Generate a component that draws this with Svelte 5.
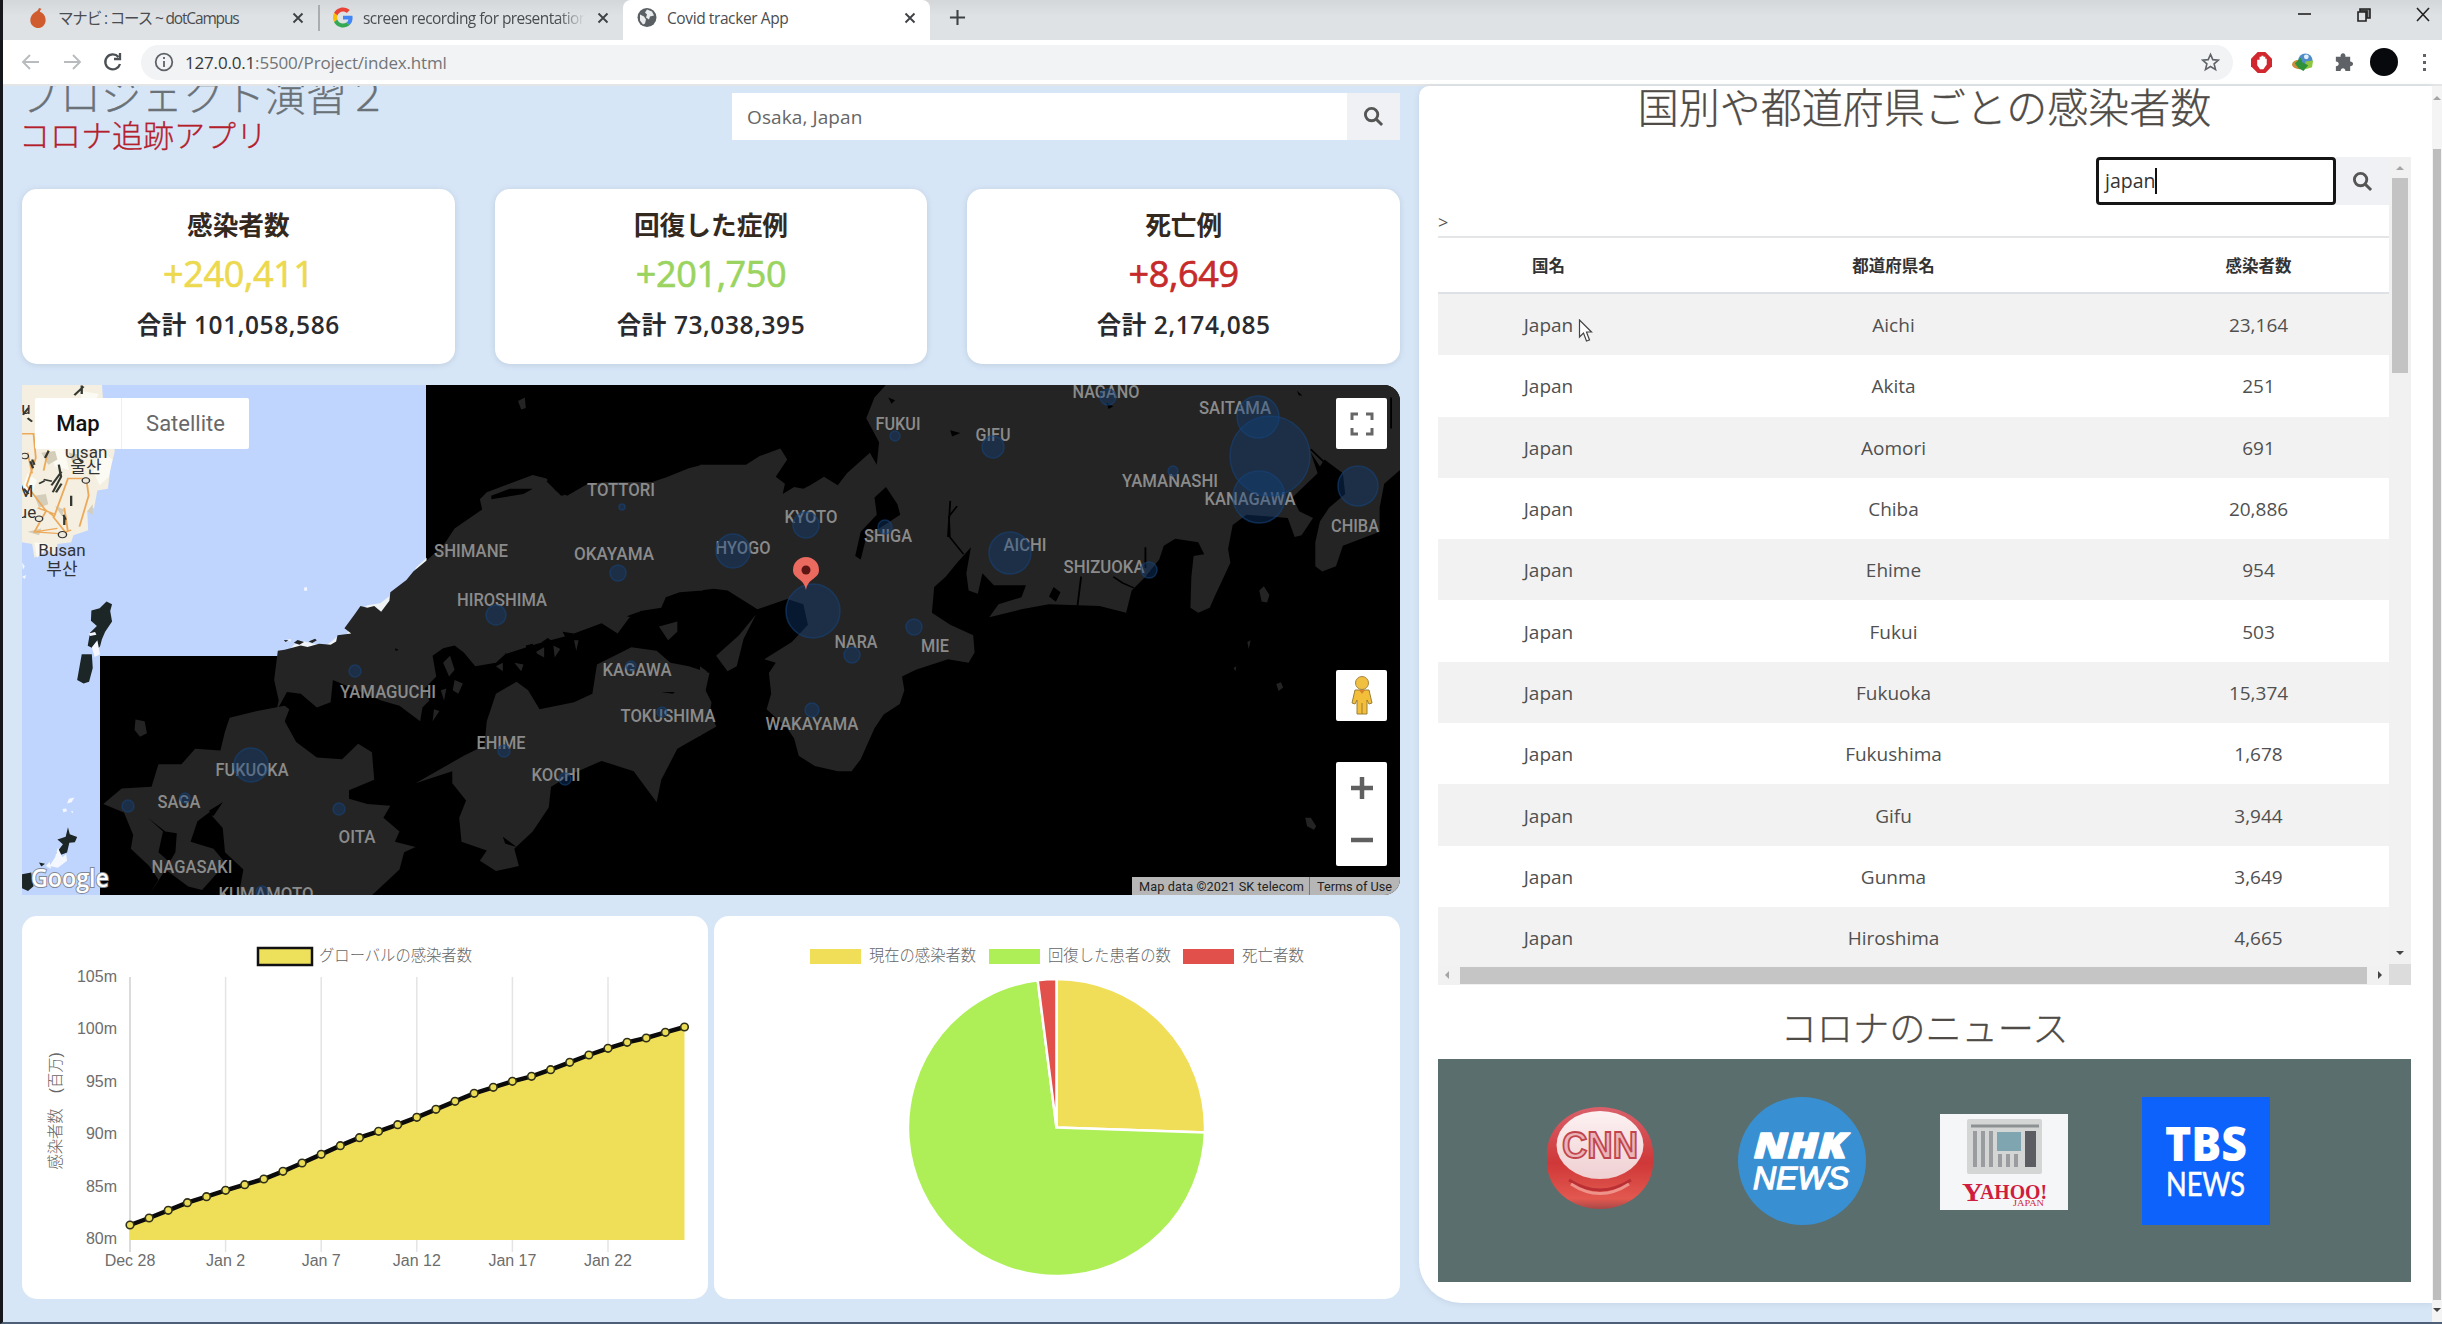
<script>
  const tabs = [
    { title: 'マナビ : コース ~ dotCampus', icon: 'flame' },
    { title: 'screen recording for presentation', icon: 'google' },
    { title: 'Covid tracker App', icon: 'globe', active: true }
  ];

  const stats = [
    { title: '感染者数', today: '+240,411', total: '合計 101,058,586', tone: 'yellow' },
    { title: '回復した症例', today: '+201,750', total: '合計 73,038,395', tone: 'green' },
    { title: '死亡例', today: '+8,649', total: '合計 2,174,085', tone: 'red' }
  ];

  const rows = [
    ['Aichi', '23,164'], ['Akita', '251'], ['Aomori', '691'], ['Chiba', '20,886'],
    ['Ehime', '954'], ['Fukui', '503'], ['Fukuoka', '15,374'], ['Fukushima', '1,678'],
    ['Gifu', '3,944'], ['Gunma', '3,649'], ['Hiroshima', '4,665']
  ];

  // name, centre x, centre y, drawn width (map canvas units)
  const labels = [
    ['TOTTORI', 599, 105, 68], ['SHIMANE', 449, 166, 74], ['OKAYAMA', 592, 169, 80],
    ['HIROSHIMA', 480, 215, 90], ['YAMAGUCHI', 366, 307, 96], ['FUKUOKA', 230, 385, 73],
    ['SAGA', 157, 417, 43], ['OITA', 335, 452, 37], ['NAGASAKI', 170, 482, 81],
    ['KUMAMOTO', 244, 509, 95], ['EHIME', 479, 358, 49], ['KOCHI', 534, 390, 49],
    ['KAGAWA', 615, 285, 69], ['TOKUSHIMA', 646, 331, 95], ['HYOGO', 721, 163, 55],
    ['KYOTO', 789, 132, 53], ['SHIGA', 866, 151, 48], ['FUKUI', 876, 39, 45],
    ['GIFU', 971, 50, 35], ['NAGANO', 1084, 7, 67], ['YAMANASHI', 1148, 96, 96],
    ['SAITAMA', 1213, 23, 72], ['KANAGAWA', 1228, 114, 91], ['CHIBA', 1333, 141, 48],
    ['SHIZUOKA', 1082, 182, 81], ['AICHI', 1003, 160, 43], ['NARA', 834, 257, 43],
    ['MIE', 913, 261, 28], ['WAKAYAMA', 790, 339, 93]
  ];

  // cx, cy, radius of each prefecture's case bubble
  const bubbles = [
    [1248, 71, 40], [1237, 112, 26], [1236, 32, 21], [1336, 101, 20], [791, 226, 27],
    [988, 168, 21], [711, 166, 17], [784, 140, 13], [971, 62, 11], [1127, 185, 8],
    [863, 142, 7], [892, 242, 8], [830, 270, 8], [790, 325, 7], [873, 51, 5],
    [596, 188, 8], [474, 230, 10], [229, 380, 17], [106, 421, 6], [317, 424, 6],
    [333, 286, 6], [482, 366, 6], [543, 394, 6], [1151, 86, 5], [1086, 12, 8],
    [609, 281, 5], [640, 327, 5], [600, 122, 3], [240, 507, 6], [163, 413, 5]
  ];

  const series = [975, 954, 931, 908, 890, 871, 854, 837, 814, 789, 763, 737, 713, 694, 674, 652, 628, 604, 580, 562, 544, 529, 509, 487, 465, 445, 427, 414, 397, 381];
  const points = series.map((v, i) => [108 + i * 19.12, v / 3 - 16]);
  const line = points.map((p) => p.join(',')).join(' ');
  const yTicks = ['105m', '100m', '95m', '90m', '85m', '80m'];
  const xTicks = ['Dec 28', 'Jan 2', 'Jan 7', 'Jan 12', 'Jan 17', 'Jan 22'];

  const pieLegend = [
    { text: '現在の感染者数', x: 96, color: '#f0de58', w: 107 },
    { text: '回復した患者の数', x: 275, color: '#aeef57', w: 123 },
    { text: '死亡者数', x: 469, color: '#e2504b', w: 62 }
  ];
</script>

{#snippet magnifier()}
  <svg class="magnifier" viewBox="0 0 22 22"><circle cx="9" cy="9" r="6.500" /><path d="M14 14l6 6" /></svg>
{/snippet}

<div class="screen">
  <header class="tabbar">
    {#each tabs as tab}
      <div class="tab" class:active={tab.active}>
        {#if tab.icon === 'flame'}
          <svg class="favicon" viewBox="0 0 20 22"><path d="M11 1c-1 3-2 3-5 5-4 3-5 8-3 12 2 3 5 4 8 4 4 0 7-4 7-8 0-5-3-8-6-9 0-1 1-3 2-3z" fill="#cf5b2f" /></svg>
        {:else if tab.icon === 'google'}
          <svg class="favicon" viewBox="0 0 48 48">
            <path fill="#ea4335" d="M24 9.500c3.500 0 6.700 1.200 9.200 3.600l6.900-6.900C35.900 2.400 30.500 0 24 0 14.600 0 6.500 5.400 2.600 13.200l8 6.200C12.400 13.700 17.700 9.500 24 9.500z" />
            <path fill="#4285f4" d="M47 24.600c0-1.600-.2-3.100-.4-4.600H24v9h12.900c-.6 3-2.200 5.500-4.700 7.200l7.700 6C44.400 38 47 31.800 47 24.600z" />
            <path fill="#fbbc05" d="M10.500 28.600A14.500 14.500 0 0 1 10.500 19.400l-8-6.200a24 24 0 0 0 0 21.600z" />
            <path fill="#34a853" d="M24 48c6.500 0 11.900-2.100 15.900-5.800l-7.700-6c-2.200 1.500-4.900 2.300-8.200 2.300-6.300 0-11.600-4.200-13.500-9.900l-8 6.200C6.500 42.600 14.600 48 24 48z" />
          </svg>
        {:else}
          <svg class="favicon" viewBox="0 0 20 20"><circle cx="10" cy="10" r="9.500" fill="#5a5f64" /><path d="M3 7l4 2 2 3-1 4-2 1-3-4zM10 2l5 2 2 4-4 1-1 3-3-2 1-3-2-2z" fill="#e8eaec" /></svg>
        {/if}
        <span class="tab-title">{tab.title}</span>
        <svg class="close" viewBox="0 0 12 12"><path d="M1.500 1.500l9 9M10.500 1.500l-9 9" /></svg>
      </div>
    {/each}
    <svg class="new-tab" viewBox="0 0 18 18"><path d="M9 1v16M1 9h16" /></svg>
    <div class="window-buttons">
      <svg viewBox="0 0 16 16"><path d="M1 7h13" /></svg>
      <svg viewBox="0 0 16 16"><path d="M2 5h8v9H2z" /><path d="M4 4V2h10v9h-3V4z" fill="#333" fill-opacity=".5" /></svg>
      <svg viewBox="0 0 16 16"><path d="M2 1l12 13M14 1L2 14" /></svg>
    </div>
  </header>

  <nav class="toolbar">
    <svg class="nav dim" viewBox="0 0 20 20"><path d="M18 10H2M9 3l-7 7 7 7" /></svg>
    <svg class="nav dim" viewBox="0 0 20 20"><path d="M2 10h16M11 3l7 7-7 7" /></svg>
    <svg class="nav" viewBox="0 0 20 20"><path d="M17 12a7.500 7.500 0 1 1-1.500-7M17 1v6h-6" /></svg>
    <div class="address">
      <svg class="info" viewBox="0 0 20 20"><circle cx="10" cy="10" r="8.300" /><path d="M10 9v6M10 5v2" /></svg>
      <span class="url"><b>127.0.0.1</b>:5500/Project/index.html</span>
      <svg class="star" viewBox="0 0 20 20"><path d="M10 2l2.400 5.500 6 .5-4.600 4 1.500 6-5.300-3.200L4.700 18l1.500-6-4.600-4 6-.5z" /></svg>
    </div>
    <div class="extensions">
      <svg viewBox="0 0 22 22"><path d="M7 0h8l7 7v8l-7 7H7l-7-7V7z" fill="#d0282e" /><path d="M6.500 8v6l3 4h3.500l3.500-5V7h-1.500V5h-2V4h-2v1H9v3z" fill="#fff" /></svg>
      <svg viewBox="0 0 22 22"><ellipse cx="8" cy="13" rx="8" ry="5" fill="#c98d3c" /><circle cx="14" cy="9" r="7.500" fill="#4d8cc8" /><circle cx="15" cy="5" r="2.500" fill="#e3effa" /><path d="M14 10l8-1-1 7-7 2z" fill="#8cc73e" /><path d="M3 12l6-6 2 5 6 3-5 6-5-3z" fill="#2f9138" /></svg>
      <svg viewBox="0 0 22 22"><path d="M3 5h5c-1-5 6-5 5 0h5v5c4 0 4 5 0 5v5h-5c0-4-5-4-5 0H3v-5c4 0 4-5 0-5z" fill="#5f6368" /></svg>
      <span class="avatar"></span>
      <span class="dots"><i></i><i></i><i></i></span>
    </div>
  </nav>

  <div class="page">
    <main class="left">
      <div class="masthead">
        <div class="brand">
          <h1>プロジェクト演習２</h1>
          <h2>コロナ追跡アプリ</h2>
        </div>
        <div class="search">
          <span class="field">Osaka, Japan</span>
          <span class="go">{@render magnifier()}</span>
        </div>
      </div>

      <section class="stats">
        {#each stats as s}
          <article class="stat">
            <h3>{s.title}</h3>
            <strong class={s.tone}>{s.today}</strong>
            <p>{s.total}</p>
          </article>
        {/each}
      </section>

      <section class="map">
        <svg class="map-canvas" viewBox="0 0 1378 510">
          <rect width="1378" height="510" fill="#000" />
          <path d="M0 0H404V271H78V510H0z" fill="#c0d5fd" />
          <g transform="translate(-22 -15) scale(.4592 .3444)">
            <path d="M48 43H222L224 80 232 100 250 235 240 290 235 345 212 350 205 400 190 410 192 465 160 480 155 500 125 505 120 540 100 520 75 545 70 505 48 500z" fill="#f4efe0" />
            <g fill="#fbfaf3"><path d="M215 230l30 30-8 50-20 25-14-40zM175 60l40 10-8 20-30-5zM75 500l30 5-10 25-15 15zM100 220l40 10 10 60-30-10zM60 300l20 20-10 40-20-20z" /></g>
            <g fill="#d3cdb9"><path d="M90 240l30-5 5 25-20 15zM75 365l25-5 5 30-20 10zM150 240l20 5-10 30zM60 470l30-10-5 20zM120 395l20 10-5 20zM190 410l12-20 0 30z" /></g>
            <g fill="none" stroke="#eda95a" stroke-width="4"><path d="M48 185h25l5 70-20 80 40 70 20 20 30-110 40 0 5 50-20 90M75 470l55 5 25-10M100 410l-25 60 50-10M115 425l30 50M140 400l8 70M60 240l10 60M82 400l40 20M105 232l-10 60" /></g>
            <g fill="none" stroke="#343830" stroke-width="5"><path d="M182 48l-20 25M178 45v25M112 335l22-40M122 355l12-25M60 140l10 10M128 275l5 35-18 45M155 365v30M95 318l18 5M70 260l5 15M140 425v25M170 255l10 15M85 330l12-8M50 130l12-20M66 265l6 20M98 255l8-20M138 420l5 15M52 345l10 15" /></g>
            <g fill="#eee9da" stroke="#333" stroke-width="3"><circle cx="187" cy="321" r="8" /><circle cx="85" cy="432" r="8" /><circle cx="136" cy="478" r="9" /><circle cx="54" cy="250" r="8" /></g>
            <path d="M232 672l12 8-4 20 4 30-15 30-7 22 -4 20-5 8-12-3-10-6 5-38 15-20-13-15 1-30 18-6zM178 825l22 0 2 40-8 40-12 5-14-10z" fill="#1d2627" />
            <path d="M148 1328l4 20 16 8-5 15-12 2-5 28-16 8-8-5 15-27-12-14 18-8zM85 1430l13 4-8 8zM48 1464l20-5 5 40-12 14-13-8z" fill="#1d2627" />
            <path d="M193 765l14-4 3 8-14 3zM200 805l12-20 6 40-12 8zM150 1245l12-4-6 14-10 4zM136 1275l8-2 2 8-8 3zM155 1280l5 2-3 6zM120 1415l6-28 10 28 8-10 2 20-20 20-18-5zM100 1440l8-12 3 20zM662 632l6-2 1 10-6 2zM48 560l6 10-4 10zM48 600l9-5-3 12z" fill="#f4f7ff" />
            <path d="M929 545l-24 30 0 15 24-20zM918 597l12-1-2 8-8-1zM850 655l-22 22-28 6-22 18 20-8 35 10 15-20zM760 755l10 5-3 15-12-5zM738 770l-6 28-30 8 20-18zM640 798l22-10 30 10-30 8-35 12zM625 783l8-2 0 8z" fill="#f0f3f5" />
            <g fill="#242424">
              <path d="M1530 275L1500 285 1450 312 1420 325 1320 325 1280 330 1235 365 1210 350 1190 315 1160 305 1060 355 1045 375 1050 405 990 460 965 510 929 553 900 585 885 610 850 645 848 670 830 702 815 685 800 690 785 685 772 710 750 750 765 765 735 770 732 788 720 798 695 795 670 804 655 800 620 812 605 815 597 900 607 960 602 990 625 935 655 940 690 980 720 965 725 900 830 960 870 975 915 1020 920 980 935 960 925 925 950 890 942 830 965 808 990 800 1010 820 1035 860 1080 850 1100 825 1170 795 1240 770 1310 735 1345 765 1370 720 1395 700 1440 690 1450 660 1480 645 1530 640z" />
              <path d="M640 792l8-8 14 6-10 8zM672 788l14-8 4 5-10 8zM618 784l10 1-6 5z" />
              <path d="M1125 905L1080 940 1060 1020 1055 1090 1010 1120 905 1200 985 1165 985 1200 1015 1250 1000 1300 1005 1370 1060 1395 1045 1425 1080 1455 1130 1440 1120 1390 1160 1340 1195 1270 1200 1210 1250 1170 1310 1135 1380 1165 1430 1255 1440 1190 1475 1100 1560 1035 1545 990 1535 940 1545 880 1500 860 1460 850 1430 815 1375 805 1300 855 1290 940 1250 965 1175 985 1150 930z" />
              <path d="M620 975L560 990 500 1010 490 1050 480 1105 425 1100 395 1145 345 1145 330 1210 265 1215 225 1260 270 1285 290 1350 285 1390 325 1440 345 1480 325 1525 370 1430 345 1400 355 1340 322 1300 360 1340 385 1345 382 1400 360 1450 410 1500 440 1510 480 1450 490 1430 465 1390 415 1370 430 1310 485 1255 462 1295 485 1330 490 1400 530 1450 520 1525 810 1525 870 1450 880 1400 905 1385 860 1370 870 1340 835 1300 850 1265 800 1260 760 1245 760 1220 815 1190 810 1110 780 1085 745 1130 690 1125 645 1080 620 1020 630 985z" />
              <path d="M295 1015l20 5 5 35-15 10-12-20zM1435 745l40-15 0 30-20 25zM1128 90l15-10 2 30-10 5z" />
            </g>
            <path d="M1070 365l40-20 50 0-20 15-70 15zM455 1280l30-25-20 40zM1195 318l35 45-8 2-32-42z" fill="#000" />
            <g fill="#242424"><path d="M965 850l15-20 10 40-12 20zM990 900l18 10-10 30-12-10zM960 930l12-5-5 35zM1080 860l15-10 0 25zM1120 850l20 5-5 20zM1165 820l20-15 0 30zM1205 800l15 10-12 25zM945 985l12 5-15 30zM1250 785l10 0-5 30z" /></g>
            <g fill="#000"><path d="M1145 800l15-5 10 30-20 10zM1180 790l10 30 15-30-12-12zM1225 760l10 25 15-20zM1365 715l25-12-5 20zM860 808l8 4-6 4zM1440 935h30l-5 5zM1095 1355l30 30-25-10zM1100 822l12 10-8 8z" /></g>
          </g>
          <g transform="translate(678 -15) scale(.4592 .3444)">
            <g fill="#242424">
              <path d="M0 275L100 275 130 250 175 228 190 260 165 310 185 330 180 360 205 340 225 345 240 335 270 310 300 335 320 300 370 240 385 275 390 210 362 140 380 80 405 43 1525 43 1525 290 1490 330 1480 400 1480 470 1440 490 1400 510 1385 570 1355 585 1340 570 1340 500 1350 440 1370 400 1405 360 1400 300 1360 260 1350 280 1330 240 1345 300 1290 370 1305 410 1335 430 1310 480 1295 485 1280 430 1190 420 1160 450 1150 520 1155 560 1120 660 1110 690 1085 705 1068 690 1070 600 1075 540 1098 535 1085 500 1035 490 1010 510 1000 550 970 600 940 640 928 705 870 685 760 680 700 695 630 718 650 680 700 660 710 625 640 625 615 590 605 650 585 640 580 590 590 515 560 560 535 600 510 630 505 705 545 740 595 770 598 820 585 850 540 840 470 870 440 890 445 930 435 970 400 1000 380 1040 350 1130 330 1165 300 1165 250 1150 215 1120 205 1070 190 1040 145 985 155 940 150 880 165 850 140 840 200 790 235 740 225 680 190 665 125 695 60 640 30 635 0 640z" />
              <path d="M122 710L85 770 35 830 60 875 80 860 95 780zM0 860l15 15-5 50 15 40-5 50-20 50zM1218 640l10-12 12 25-5 22-12-3zM1318 1300l12 0 12 25-5 10-15-10zM1255 912l10-5 5 15-10 10zM1192 790l7-5-4 25zM1162 865l6-5-2 15z" />
            </g>
            <path d="M405 340L430 390 436 420 390 460 365 470 350 550 338 540 350 470 385 420 380 370zM545 175l22 8-18 10zM410 80l15 8-8 10zM770 630l15 15-10 28-15-15zM1300 60l12 15-8-2zM885 95l15 10-10 8z" fill="#000" />
            <path d="M560 395l-18 30 2 60 30 50M545 380l-5 105M830 600l-8 85M900 600l20 18 25 15M970 515v60M1330 230l35 45M1505 80v90" fill="none" stroke="#000" stroke-width="4" />
          </g>
          <g class="labels">
            {#each labels as [name, x, y, w]}
              <text {x} y={y + 6} textLength={w} lengthAdjust="spacingAndGlyphs">{name}</text>
            {/each}
          </g>
          <g class="bubbles">
            {#each bubbles as [cx, cy, r]}<circle {cx} {cy} {r} />{/each}
          </g>
          <path d="M784 205c-2-12-13-11-13-20a13 13 0 0 1 26 0c0 9-11 8-13 20z" fill="#ea6a60" />
          <circle cx="784" cy="185" r="4.500" fill="#5b1512" />
          <g class="korea">
            <text x="64" y="73">Ulsan</text><text x="64" y="88">울산</text>
            <text x="40" y="171">Busan</text><text x="40" y="190">부산</text>
            <text x="4" y="29">u</text><text x="5" y="133">ue</text><text x="4" y="112">M</text>
          </g>
          <text class="google" x="9" y="502" textLength="78" lengthAdjust="spacingAndGlyphs">Google</text>
        </svg>
        <div class="map-type"><span class="on">Map</span><span>Satellite</span></div>
        <div class="map-tools">
          <span class="tool"><svg viewBox="0 0 24 24"><path d="M2 8V2h6M16 2h6v6M22 16v6h-6M8 22H2v-6" fill="none" stroke="#666" stroke-width="3" /></svg></span>
          <span class="tool pegman"><svg viewBox="0 0 24 40"><circle cx="12" cy="7" r="6.500" fill="#f0c040" stroke="#a98545" /><path d="M5 14h14l3 13-3 1-2-4v14H7V24l-2 4-3-1z" fill="#f3bf3b" stroke="#9b8038" /><path d="M9 14l3 4 3-4z" fill="#d9822b" /><path d="M12 27v11" stroke="#a17a2c" /></svg></span>
          <span class="tool zoom"><svg viewBox="0 0 24 24"><path d="M12 1v22M1 12h22" /></svg><svg viewBox="0 0 24 24"><path d="M1 12h22" /></svg></span>
        </div>
        <div class="map-credit"><span>Map data ©2021 SK telecom</span><span>Terms of Use</span></div>
      </section>

      <section class="charts">
        <svg class="chart" viewBox="0 0 686 383">
          <rect x="236" y="32" width="54" height="17" fill="#ede05a" stroke="#111" stroke-width="2.500" />
          <text x="297" y="45" textLength="153" lengthAdjust="spacingAndGlyphs">グローバルの感染者数</text>
          {#each xTicks as t, i}
            <path d="M{108 + i * 95.6} 61V336" stroke={i ? '#e4e4e4' : '#cfcfcf'} stroke-width="1.500" />
            <text class="tick mid" x={108 + i * 95.6} y="350">{t}</text>
          {/each}
          {#each yTicks as t, i}
            <text class="tick end" x="95" y={65.5 + i * 52.5}>{t}</text>
          {/each}
          <text class="mid" transform="translate(39 195) rotate(-90)" textLength="117" lengthAdjust="spacingAndGlyphs">感染者数　(百万)</text>
          <polygon points="108,324 {line} 662.5,324" fill="#efdf58" />
          <polyline points={line} fill="none" stroke="#0b0b0b" stroke-width="4.500" />
          {#each points as [cx, cy]}<circle {cx} {cy} r="3.800" fill="#eadc55" stroke="#30301a" stroke-width="1.600" />{/each}
        </svg>
        <svg class="chart" viewBox="0 0 686 383">
          {#each pieLegend as l}
            <rect x={l.x} y="33" width="51" height="15" fill={l.color} />
            <text x={l.x + 59} y="45" textLength={l.w} lengthAdjust="spacingAndGlyphs">{l.text}</text>
          {/each}
          <g stroke="#fff" stroke-width="2.500">
            <path d="M342.500 211.500V63A148.500 148.500 0 0 1 490.900 216.500z" fill="#f0de58" />
            <path d="M342.500 211.500L490.900 216.500A148.500 148.500 0 1 1 323.700 64.200z" fill="#aeef57" />
            <path d="M342.500 211.500L323.700 64.200A148.500 148.500 0 0 1 342.500 63z" fill="#e2504b" />
          </g>
        </svg>
      </section>
    </main>

    <aside class="right">
      <h2>国別や都道府県ごとの感染者数</h2>
      <div class="table-box">
        <div class="table-main">
          <div class="filter">
            <span class="filter-field">japan<i></i></span>
            <span class="filter-go">{@render magnifier()}</span>
          </div>
          <div class="stray">&gt;</div>
          <div class="row head"><span>国名</span><span>都道府県名</span><span>感染者数</span></div>
          <div class="rows">
            {#each rows as [name, count]}
              <div class="row"><span>Japan</span><span>{name}</span><span>{count}</span></div>
            {/each}
          </div>
          <div class="hbar"><i class="arrow l"></i><b></b><i class="arrow r"></i></div>
        </div>
        <div class="vbar"><i class="arrow u"></i><b></b><i class="arrow d"></i><em></em></div>
      </div>
      <h2 class="news-title">コロナのニュース</h2>
      <div class="news">
        <svg class="logo" viewBox="0 0 128 128">
          <defs>
            <linearGradient id="face" x2="0" y2="1"><stop offset="0" stop-color="#fdf1f2" /><stop offset="1" stop-color="#efcfd2" /></linearGradient>
            <linearGradient id="rim" x2="0" y2="1"><stop offset="0" stop-color="#d9606a" /><stop offset=".55" stop-color="#cf3838" /><stop offset=".9" stop-color="#e2584f" /><stop offset="1" stop-color="#a84848" /></linearGradient>
          </defs>
          <path d="M11 56a53 46 0 0 1 106 0v10a53 46 0 0 1-106 0z" fill="url(#rim)" />
          <ellipse cx="64" cy="48" rx="43.500" ry="34" fill="url(#face)" />
          <path d="M33 83q31 20 62 0" fill="none" stroke="#b92f33" stroke-width="3" />
          <path d="M35 87q29 19 58 0" fill="none" stroke="#ee938a" stroke-width="3" />
          <text x="26" y="61" textLength="76" lengthAdjust="spacingAndGlyphs" class="cnn">CNN</text>
        </svg>
        <svg class="logo" viewBox="0 0 128 128">
          <circle cx="64" cy="64" r="64" fill="#3890d3" />
          <text x="16" y="61" textLength="93" lengthAdjust="spacingAndGlyphs" class="nhk">NHK</text>
          <text x="15" y="92" textLength="96" lengthAdjust="spacingAndGlyphs" class="nhk-news">NEWS</text>
        </svg>
        <svg class="logo" viewBox="0 0 128 128">
          <rect y="17" width="128" height="96" fill="#f5f6f8" />
          <rect x="27" y="22" width="75" height="55" rx="2" fill="#d4d6d6" />
          <path d="M31 29h68" stroke="#8d9191" stroke-width="3" />
          <path d="M35 34v36M43 34v36M51 34v36M60 57v13M68 57v13M76 57v13" stroke="#9a9d9f" stroke-width="4" />
          <rect x="57" y="35" width="24" height="19" fill="#7fa5b1" /><rect x="85" y="34" width="11" height="36" fill="#5b5d62" />
          <text x="22" y="104" class="yahoo" textLength="21" lengthAdjust="spacingAndGlyphs">Y</text>
          <text x="40" y="102" class="yahoo mid-size" textLength="67" lengthAdjust="spacingAndGlyphs">AHOO!</text>
          <text x="73" y="109" textLength="31" lengthAdjust="spacingAndGlyphs" class="yahoo small">JAPAN</text>
        </svg>
        <svg class="logo" viewBox="0 0 128 128">
          <rect width="128" height="128" fill="#0d62fb" />
          <text x="23" y="64" textLength="82" lengthAdjust="spacingAndGlyphs" class="tbs">TBS</text>
          <text x="24" y="99" textLength="79" lengthAdjust="spacingAndGlyphs" class="tbs thin">NEWS</text>
        </svg>
      </div>
    </aside>
    <div class="page-scroll"><i class="arrow u"></i><b></b><i class="arrow d"></i></div>
  </div>
  <svg class="pointer" viewBox="0 0 14 24"><path d="M1 1v17l4-4 3 8 3-1-3-8h5z" fill="#fff" stroke="#444" stroke-width="1.200" /></svg>
</div>

<style>
  :global(body) { margin: 0; overflow: hidden; }
  * { box-sizing: border-box; }
  h1, h2, h3, p { margin: 0; font-weight: 300; }
  .screen {
    position: relative; width: 2442px; height: 1324px; overflow: hidden;
    display: flex; flex-direction: column; border-left: 3px solid #15171c; border-bottom: 2px solid #4e6078;
    background: #fff; font-family: "Open Sans", "Noto Sans CJK JP", sans-serif; color: #333;
  }
  .tabbar { height: 40px; flex: none; display: flex; align-items: stretch; background: linear-gradient(#d4d7da, #dfe2e5 40%, #dfe2e5); }
  .tab { width: 310px; display: flex; align-items: center; padding: 0 14px 5px 25px; font-size: 15.500px; color: #4a4d50; }
  .tab:first-child { width: 317px; letter-spacing: -.8px; border-right: 2px solid #a9adb0; border-image: linear-gradient(transparent 15%, #a9adb0 15%, #a9adb0 75%, transparent 75%) 1; }
  .tab:first-child .tab-title { letter-spacing: -1.150px; }
  .tab:nth-child(2) { width: 303px; padding-left: 13px; }
  .tab.active { width: 307px; background: #fff; border-radius: 8px 8px 0 0; padding-left: 14px; }
  .favicon { width: 20px; height: 21px; margin-right: 10px; flex: none; }
  .tab-title { flex: 1; white-space: nowrap; overflow: hidden; letter-spacing: -.4px; }
  .tab:nth-child(2) .tab-title { letter-spacing: -.550px; mask-image: linear-gradient(90deg, #000 88%, transparent); }
  .close { width: 12px; height: 12px; margin-left: 12px; flex: none; stroke: #3f4245; stroke-width: 1.900; }
  .new-tab { width: 17px; height: 17px; margin: 9px 0 0 19px; stroke: #3f4245; stroke-width: 2.200; }
  .window-buttons { margin-left: auto; display: flex; gap: 43px; padding: 7px 11px 0 0; }
  .window-buttons svg { width: 16px; height: 16px; fill: none; stroke: #222; stroke-width: 1.600; }
  .toolbar { height: 46px; flex: none; display: flex; align-items: center; background: #fff; padding-left: 18px; border-bottom: 2px solid #e3e5e6; }
  .nav { width: 20px; height: 20px; margin-right: 21px; fill: none; stroke: #4c5054; stroke-width: 2.300; }
  .nav.dim { stroke: #b9bcbe; stroke-width: 1.900; }
  .address { width: 2092px; height: 35px; border-radius: 18px; background: #f1f3f4; display: flex; align-items: center; padding: 0 13px; margin-left: -3px; }
  .info { width: 20px; height: 20px; fill: none; stroke: #5f6368; stroke-width: 1.800; margin-right: 11px; }
  .url { font-size: 17px; color: #717579; letter-spacing: -.180px; }
  .url b { font-weight: 400; color: #35383b; }
  .star { width: 19px; height: 20px; margin-left: auto; fill: none; stroke: #5f6368; stroke-width: 1.700; }
  .extensions { display: flex; align-items: center; gap: 20px; padding-left: 18px; }
  .extensions svg { width: 21px; height: 21px; }
  .avatar { width: 28px; height: 28px; border-radius: 50%; background: #08090c; margin-left: -4px; }
  .dots { display: flex; flex-direction: column; gap: 4px; margin-left: 5px; }
  .dots i { width: 3px; height: 3px; background: #5f6368; }

  .page { flex: 1; min-height: 0; display: flex; background: #d7e6f7; }
  .left { width: 1378px; margin-left: 19px; display: flex; flex-direction: column; }
  .masthead { height: 103px; flex: none; display: flex; justify-content: space-between; }
  .brand { overflow: hidden; margin-left: -4px; padding-left: 1px; }
  h1 { font-size: 41px; line-height: 44px; margin-top: -13px; color: #6b7277; -webkit-text-stroke: .3px currentColor; }
  h2 { font-size: 31px; line-height: 36px; color: #b3202c; -webkit-text-stroke: .3px currentColor; }
  .search { width: 668px; height: 47px; margin-top: 7px; display: flex; }
  .field { flex: 1; background: #fff; padding-left: 15px; font-size: 19px; line-height: 49px; color: #666; letter-spacing: .1px; }
  .go, .filter-go { width: 53px; background: #eff1f4; display: flex; align-items: center; justify-content: center; }
  .magnifier { width: 21px; height: 21px; fill: none; stroke: #555; stroke-width: 3; }
  .stats { height: 175px; flex: none; display: flex; gap: 40px; }
  .stat { flex: 1; background: #fff; border-radius: 15px; box-shadow: 0 1px 6px rgba(90, 110, 130, .2); display: flex; flex-direction: column; align-items: center; }
  .stat h3 { font-size: 25.700px; line-height: 38px; font-weight: 600; margin-top: 18px; color: #33291f; }
  .stat strong { font-size: 36px; line-height: 50px; font-weight: 400; margin-top: 4px; letter-spacing: -.350px; -webkit-text-stroke: .7px currentColor; }
  .stat p { font-size: 24.500px; line-height: 34px; font-weight: 600; margin-top: 9px; color: #2b2b2e; letter-spacing: .6px; }
  .yellow { color: #ecd94f; }
  .green { color: #9ad45f; }
  .red { color: #c62a2a; }

  .map { position: relative; height: 510px; flex: none; margin-top: 21px; border-radius: 0 16px 16px 0; overflow: hidden; }
  .map-canvas { display: block; width: 100%; height: 100%; }
  .labels text { font: 500 18px Roboto, sans-serif; fill: #8b8b8b; text-anchor: middle; }
  .bubbles circle { fill: rgba(17, 67, 125, .38); stroke: rgba(23, 66, 120, .6); stroke-width: 1.500; }
  .korea text { font: 17px Roboto, "Noto Sans CJK KR", sans-serif; fill: #333; text-anchor: middle; }
  .google { font: 600 25px "Open Sans", sans-serif; fill: #fff; stroke: #7f8896; stroke-width: 2px; paint-order: stroke; }
  .map-type { position: absolute; left: 13px; top: 13px; height: 51px; display: flex; background: #fff; border-radius: 2px; font: 22px/51px Roboto, sans-serif; color: #686868; }
  .map-type span { width: 127px; text-align: center; }
  .map-type .on { width: 87px; border-right: 1px solid #eee; color: #111; font-weight: 500; }
  .map-tools { position: absolute; right: 13px; top: 13px; display: flex; flex-direction: column; }
  .tool { width: 51px; height: 51px; background: #fff; border-radius: 2px; display: flex; align-items: center; justify-content: center; }
  .tool svg { width: 24px; height: 24px; }
  .pegman { margin-top: 221px; }
  .pegman svg { width: 24px; height: 40px; }
  .zoom { height: 104px; margin-top: 41px; flex-direction: column; gap: 28px; }
  .zoom svg { stroke: #606060; stroke-width: 4.500; }
  .map-credit { position: absolute; right: 0; bottom: 0; height: 18px; display: flex; background: #b6b6b6; font: 12.700px/19px Roboto, sans-serif; color: #222; }
  .map-credit span { padding: 0 7px; width: 90px; white-space: nowrap; }
  .map-credit span:first-child { width: 178px; border-right: 1px solid #777; letter-spacing: .1px; }

  .charts { display: flex; gap: 6px; margin-top: 21px; }
  .chart { flex: 1; height: 383px; min-width: 0; background: #fff; border-radius: 15px; }
  .chart text { font: 300 16px "Liberation Sans", "Noto Sans CJK JP", sans-serif; fill: #666; }
  .chart .tick { font-weight: 400; font-size: 16px; fill: #6d6d6d; }
  .chart .mid { text-anchor: middle; }
  .chart .end { text-anchor: end; }

  .right { width: 1013px; height: 1217px; margin-left: 19px; padding: 0 21px 0 19px; background: #fff; border-radius: 10px 0 0 42px; box-shadow: 0 1px 6px rgba(90, 110, 130, .15); }
  .right h2 { font-size: 41px; line-height: 44px; color: #4f4b47; text-align: center; margin-top: -1px; }
  .table-box { display: flex; height: 828px; margin-top: 28px; }
  .table-main { flex: 1; display: flex; flex-direction: column; min-width: 0; }
  .filter { display: flex; justify-content: flex-end; height: 48px; flex: none; }
  .filter-field { width: 240px; border: 3px solid #151515; border-radius: 4px; font-size: 19.500px; line-height: 42px; padding-left: 6px; color: #333; }
  .filter-field i { display: inline-block; width: 1.500px; height: 26px; background: #111; vertical-align: -6px; }
  .stray { height: 31px; flex: none; font-size: 18px; line-height: 34px; color: #555; }
  .row { height: 61.300px; flex: none; display: grid; grid-template-columns: 221px 469px 1fr; text-align: center; align-items: center; font-size: 19px; color: #505050; padding-top: 1px; }
  .row.head { height: 58px; border-top: 2px solid #e3e5e7; border-bottom: 2px solid #dee2e6; font-size: 16.500px; font-weight: 600; color: #333; padding: 0; }
  .rows { flex: 1; min-height: 0; overflow: hidden; display: flex; flex-direction: column; }
  .rows .row:nth-child(odd) { background: #f2f2f2; }
  .hbar { height: 20px; flex: none; background: #f1f1f1; display: flex; align-items: center; justify-content: space-between; padding: 0 7px; }
  .hbar b { width: 907px; height: 17px; background: #c5c5c5; }
  .vbar { width: 22px; background: #f1f1f1; display: flex; flex-direction: column; align-items: center; padding-top: 9px; }
  .vbar b { width: 16px; height: 195px; margin-top: 8px; background: #c3c3c3; }
  .vbar .d { margin-top: auto; margin-bottom: 9px; }
  .vbar em { width: 22px; height: 21px; background: #dcdcdc; }
  .arrow { border: 4px solid transparent; width: 0; height: 0; }
  .arrow.l { border-right-color: #a5a5a5; border-left: 0; }
  .arrow.r { border-left-color: #444; border-right: 0; }
  .arrow.u { border-bottom-color: #a5a5a5; border-top: 0; }
  .arrow.d { border-top-color: #444; border-bottom: 0; }
  .right .news-title { font-size: 36.200px; line-height: 44px; margin-top: 21px; }
  .news { height: 223px; margin-top: 9px; background: #5a6e6e; display: flex; gap: 74px; padding: 38px 0 0 98px; }
  .logo { width: 128px; height: 128px; }
  .cnn { font: 700 36px "Liberation Sans", sans-serif; fill: #eab4b8; stroke: #c2454e; stroke-width: 1.800; }
  .nhk { font: italic 800 36px "Open Sans", sans-serif; fill: #fff; stroke: #fff; stroke-width: 1.500px; stroke-linejoin: round; }
  .nhk-news { font: italic 400 32px "Liberation Sans", sans-serif; fill: #fff; stroke: #fff; stroke-width: 1.300px; }
  .yahoo { font: 700 26px "Liberation Serif", serif; fill: #d01c3f; }
  .yahoo.mid-size { font-size: 20px; }
  .yahoo.small { font-size: 9px; font-weight: 400; }
  .tbs { font: 800 48px "Open Sans", sans-serif; fill: #fff; }
  .tbs.thin { font: 400 33px Lato, sans-serif; stroke: #fff; stroke-width: .6px; }
  .page-scroll { flex: 1; background: #f4f4f4; display: flex; flex-direction: column; align-items: center; padding-top: 10px; overflow: hidden; }
  .page-scroll b { width: 8px; height: 1151px; margin-top: 49px; background: #bdbdbd; }
  .page-scroll .d { margin-top: 8px; }
  .pointer { position: absolute; left: 1574px; top: 319px; width: 17px; height: 24px; }
</style>
